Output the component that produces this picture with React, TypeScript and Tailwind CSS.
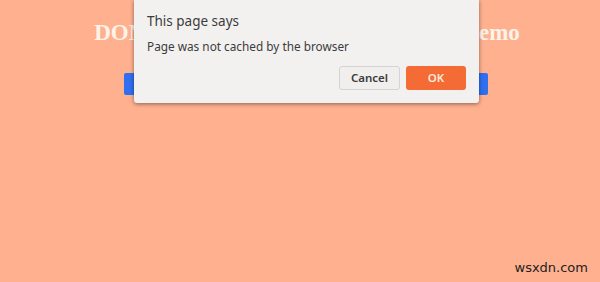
export default function App() {
  return (
    <div className="relative w-[600px] h-[282px] bg-[#ffb08f] overflow-hidden" style={{ fontFamily: '"Liberation Serif", serif' }}>
      <div className="pt-[20px] pl-[14px] text-center">
        <h1 className="text-[23px] font-bold text-[#fdf3ea] leading-[26px]" style={{ fontFamily: '"Liberation Serif", serif' }}>
          DOM PageTransitionEvent persisted Demo
        </h1>
        <div className="mt-[27px] flex justify-center">
          <button className="w-[364px] h-[22px] ml-[-2px] bg-[#2f6ff0] rounded-[2px] text-white text-sm"></button>
        </div>
      </div>

      <div
        className="absolute left-[134px] top-0 w-[345px] h-[103px] bg-[#f2f1f0] rounded-b-[3px] shadow-[0_1px_4px_rgba(0,0,0,0.45)] px-[13px]"
        style={{ fontFamily: '"Noto Sans", "Open Sans", sans-serif' }}
      >
        <div className="pt-[11px] text-[13.5px] text-[#3c3c3c] leading-[20px]">This page says</div>
        <div className="mt-[6px] text-[11.8px] text-[#3c3c3c] leading-[18px]">Page was not cached by the browser</div>
        <div className="mt-[11px] flex justify-end gap-[6px]">
          <button className="w-[61px] h-[24px] rounded-[3px] border border-[#d6d4d2] bg-[#f0efee] text-[11.5px] font-semibold text-[#3c3c3c]">
            Cancel
          </button>
          <button className="w-[60px] h-[24px] rounded-[3px] bg-[#f46b35] text-[11.5px] font-semibold text-[#fde8de]">
            OK
          </button>
        </div>
      </div>

      <div
        className="absolute right-[12px] bottom-[5px] text-[13px] text-[#222]"
        style={{ fontFamily: '"DejaVu Sans", sans-serif' }}
      >
        wsxdn.com
      </div>
    </div>
  )
}
